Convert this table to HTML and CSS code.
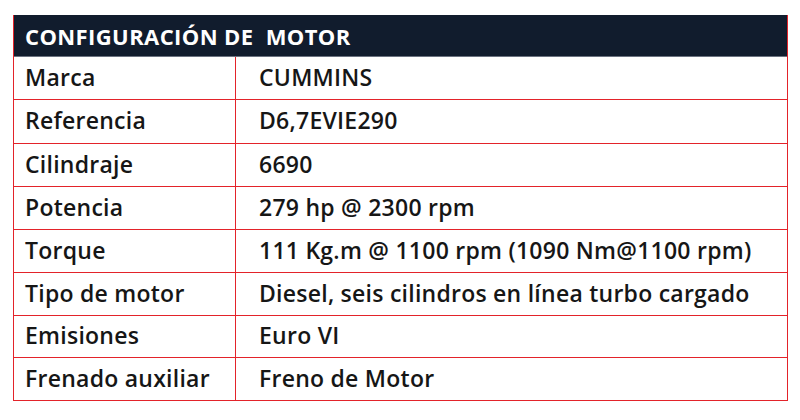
FILE: index.html
```html
<!DOCTYPE html>
<html lang="es">
<head>
<meta charset="utf-8">
<link rel="stylesheet" href="styles.css">
</head>
<body>
<div class="spec">
  <div class="spec-head">CONFIGURACIÓN DE&nbsp; MOTOR</div>
  <div class="spec-row"><div class="k">Marca</div><div class="v">CUMMINS</div></div>
  <div class="spec-row"><div class="k">Referencia</div><div class="v">D6,7EVIE290</div></div>
  <div class="spec-row"><div class="k">Cilindraje</div><div class="v">6690</div></div>
  <div class="spec-row"><div class="k">Potencia</div><div class="v">279 hp @ 2300 rpm</div></div>
  <div class="spec-row"><div class="k">Torque</div><div class="v">111 Kg.m @ 1100 rpm (1090 Nm@1100 rpm)</div></div>
  <div class="spec-row"><div class="k">Tipo de motor</div><div class="v">Diesel, seis cilindros en línea turbo cargado</div></div>
  <div class="spec-row"><div class="k">Emisiones</div><div class="v">Euro VI</div></div>
  <div class="spec-row"><div class="k">Frenado auxiliar</div><div class="v">Freno de Motor</div></div>
</div>
</body>
</html>
```
FILE: styles.css
```css
html, body { margin: 0; background: #fff; }
body { padding: 15px 13px 0 13px; font-family: "Open Sans", "Noto Sans", sans-serif; color: #161616; }
.spec { border: 1px solid #e3232a; width: 773px; }
.spec-head {
  background: #111c2d; color: #fff; font-weight: 700; font-size: 22px; letter-spacing: 0.4px;
  display: flex; align-items: center; padding-left: 11px;
  border-bottom: 1px solid #6b7280; box-sizing: border-box; height: 42px; margin-top: -1px; padding-top: 1px;
}
.spec-row { display: grid; grid-template-columns: 222px 1fr; height: 42px; box-sizing: border-box; }
.spec-row + .spec-row { border-top: 1px solid #e3232a; }
.spec-row:nth-child(3) { height: 44px; }
.spec-row:nth-child(4), .spec-row:nth-child(5), .spec-row:nth-child(6), .spec-row:nth-child(7) { height: 43px; }
.spec-row:nth-child(8) { height: 42px; }
.spec-row:nth-child(9) { height: 43px; }
.k, .v { display: flex; align-items: center; font-size: 23px; font-weight: 600; letter-spacing: 0.25px; padding-bottom: 3px; white-space: nowrap; }
.k { padding-left: 11px; border-right: 1px solid #e3232a; }
.v { padding-left: 23px; }
```
